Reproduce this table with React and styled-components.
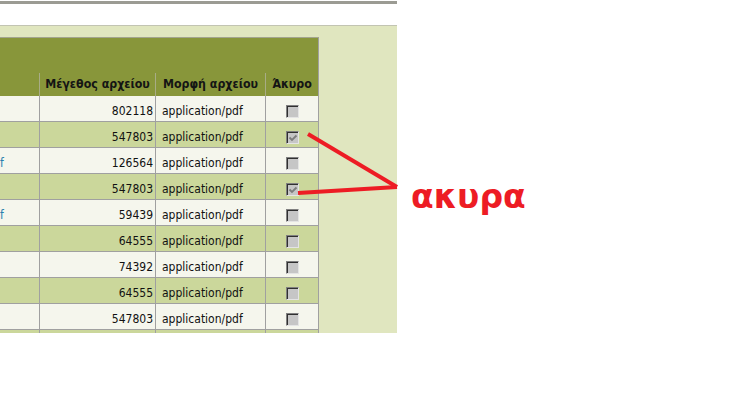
import React from "react";
import styled, { createGlobalStyle } from "styled-components";

const Global = createGlobalStyle`
  html, body { margin: 0; padding: 0; background: #ffffff; }
  body { font-family: "DejaVu Sans Condensed", "DejaVu Sans", sans-serif; }
`;

const Stage = styled.div`
  position: relative;
  width: 741px;
  height: 398px;
  background: #ffffff;
  overflow: hidden;
`;

const Shot = styled.div`
  width: 397px;
  height: 333px;
  overflow: hidden;
  display: flex;
  flex-direction: column;
`;

const TopRule = styled.div`
  margin-top: 1px;
  height: 3px;
  background: #9b9b93;
  flex: none;
`;

const WhiteBand = styled.div`
  height: 21px;
  background: #ffffff;
  flex: none;
`;

const Panel = styled.div`
  flex: 1;
  border-top: 1px solid #c2c4b2;
  background: #e0e6bf;
  padding-top: 11px;
`;

const Table = styled.div`
  width: 319px;
  border-top: 1px solid #a3a58e;
`;

const HeadBand = styled.div`
  height: 35px;
  background: #88963a;
  border-right: 1px solid #a0a0a0;
`;

const Row = styled.div`
  display: grid;
  grid-template-columns: 39px 116px 110px 53px;
  height: ${(p) => (p.$head ? "23px" : "25px")};
  background: ${(p) => (p.$head ? "#88963a" : p.$alt ? "#cbd79b" : "#f5f6ed")};
  border-right: 1px solid #a0a0a0;
  border-bottom: ${(p) => (p.$head ? "none" : "1px solid #a0a0a0")};
`;

const Cell = styled.div`
  border-left: ${(p) => (p.$first ? "none" : p.$head ? "1px solid #a8ac86" : "1px solid #a0a0a0")};
  font-size: 12px;
  line-height: 15px;
  color: #111111;
  white-space: nowrap;
  overflow: hidden;
  display: flex;
  justify-content: ${(p) => p.$align || "flex-start"};
  align-items: flex-start;
  padding: ${(p) => p.$pad || "0"};
`;

const HeadCell = styled(Cell)`
  font-weight: bold;
  font-size: 12.3px;
  align-items: center;
  color: #141414;
`;

const Link = styled.span`
  color: #2a7fae;
`;

const Box = styled.span`
  position: relative;
  display: block;
  width: 13px;
  height: 13px;
  box-sizing: border-box;
  background: #c6c6c6;
  border-top: 1px solid #808080;
  border-left: 1px solid #808080;
  border-bottom: 1px solid #e4e4e4;
  border-right: 1px solid #e4e4e4;
  box-shadow: inset 1px 1px 0 #303030;
`;

const Tick = styled.svg`
  position: absolute;
  left: 1px;
  top: 1px;
`;

const Note = styled.div`
  position: absolute;
  left: 411px;
  top: 177px;
  font-family: "DejaVu Sans", sans-serif;
  font-weight: bold;
  font-size: 33px;
  line-height: 40px;
  color: #ed1c24;
`;

const Marks = styled.svg`
  position: absolute;
  left: 0;
  top: 0;
  pointer-events: none;
`;

const rows = [
  { size: "802118" },
  { size: "547803", checked: true },
  { size: "126564", name: "f" },
  { size: "547803", checked: true },
  { size: "59439", name: "f" },
  { size: "64555" },
  { size: "74392" },
  { size: "64555" },
  { size: "547803" },
  { empty: true },
];

function Check({ checked }) {
  return (
    <Box>
      {checked && (
        <Tick width="10" height="10" viewBox="0 0 10 10">
          <polyline points="1.5,4.5 4,7 8.5,2.5" fill="none" stroke="#7c7c7c" strokeWidth="1.8" />
        </Tick>
      )}
    </Box>
  );
}

export default function App() {
  return (
    <>
      <Global />
      <Stage>
        <Shot>
          <TopRule />
          <WhiteBand />
          <Panel>
            <Table>
              <HeadBand />
              <Row $head>
                <HeadCell $first $head />
                <HeadCell $head $align="center">Μέγεθος αρχείου</HeadCell>
                <HeadCell $head $align="center">Μορφή αρχείου</HeadCell>
                <HeadCell $head $align="center">Άκυρο</HeadCell>
              </Row>
              {rows.map((r, i) => (
                <Row key={i} $alt={i % 2 === 1}>
                  <Cell $first $pad="8px 0 0 0">{r.name && <Link>{r.name}</Link>}</Cell>
                  <Cell $align="flex-end" $pad="8px 2px 0 0">{r.size}</Cell>
                  <Cell $pad="8px 0 0 6px">{!r.empty && "application/pdf"}</Cell>
                  <Cell $align="center" $pad="9px 0 0 0">
                    {!r.empty && <Check checked={r.checked} />}
                  </Cell>
                </Row>
              ))}
            </Table>
          </Panel>
        </Shot>
        <Note>ακυρα</Note>
        <Marks width="741" height="398" viewBox="0 0 741 398">
          <line x1="308" y1="134" x2="397" y2="187" stroke="#ed1c24" strokeWidth="4" />
          <line x1="298" y1="193" x2="397" y2="187" stroke="#ed1c24" strokeWidth="4" />
        </Marks>
      </Stage>
    </>
  );
}
